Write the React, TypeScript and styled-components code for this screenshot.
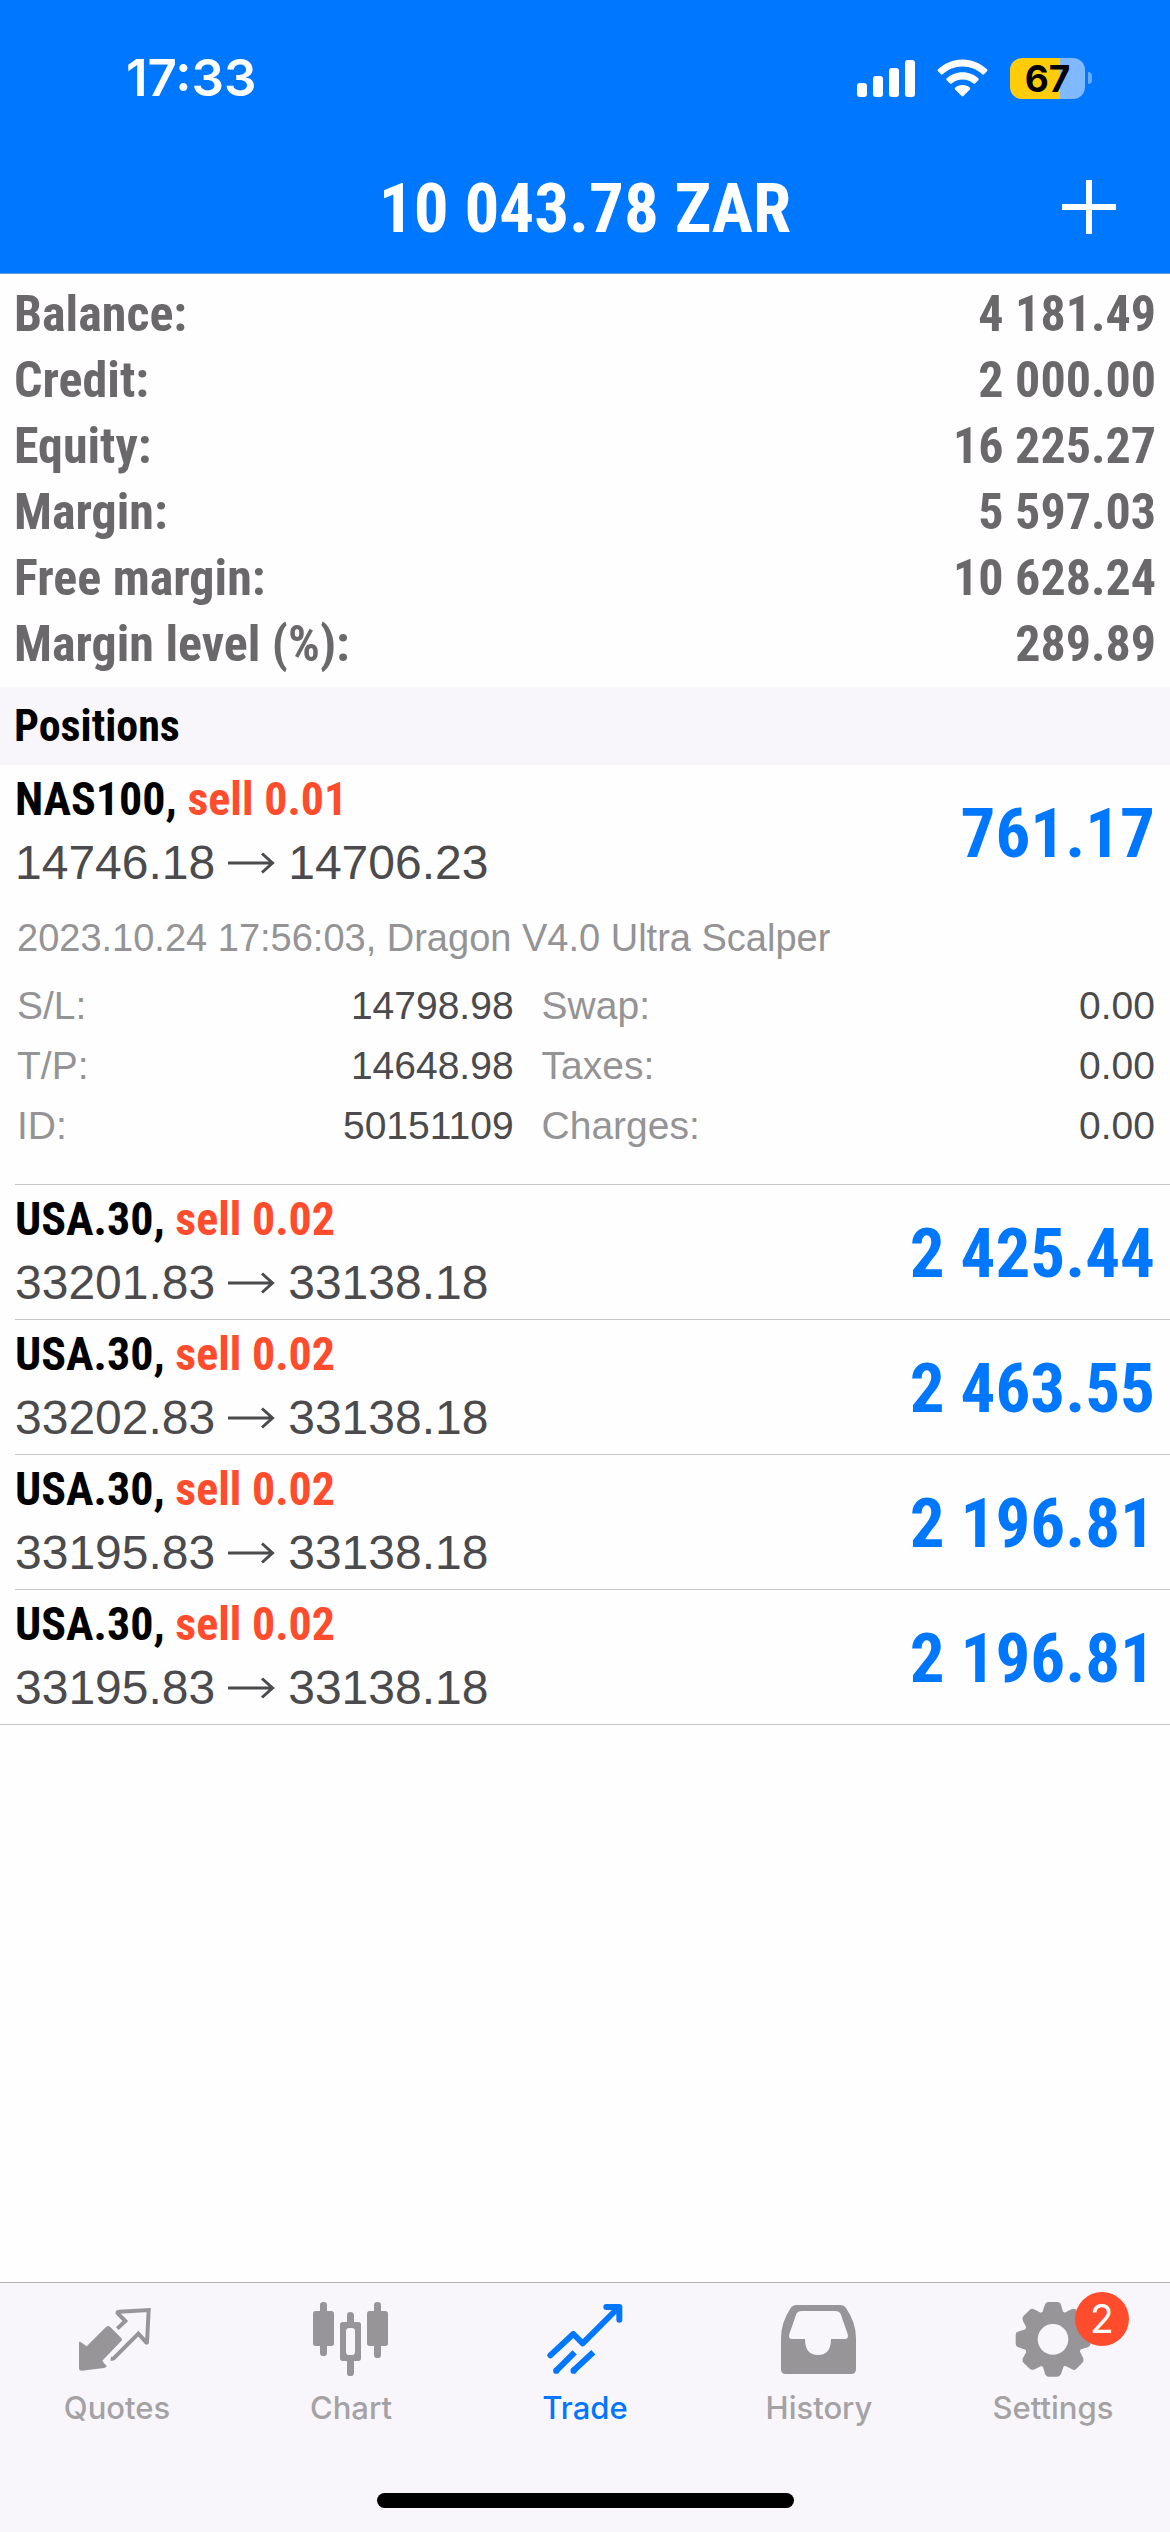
import React, { useState } from "react";
import styled, { createGlobalStyle } from "styled-components";

const colors = {
  blue: "#0077ff",
  orange: "#ff4c2c",
  summary: "#6a686b",
  ink: "#4b4a4d",
  label: "#949396",
  tab: "#979598",
  tabText: "#a4a2a5",
  line: "#c7c6c9",
  panel: "#f8f6fa",
};

const narrow = `"Roboto Condensed", "Helvetica Neue Condensed", "Liberation Sans", sans-serif`;
const regular = `"Liberation Sans", Arial, sans-serif`;
const system = `Inter, Roboto, sans-serif`;

const GlobalStyle = createGlobalStyle`
  *, *::before, *::after { box-sizing: border-box; }
  body { margin: 0; background: #fefefe; font-family: ${regular}; }
  dl, dd, dt, h1, h2, p, ul { margin: 0; padding: 0; }
  button { border: 0; padding: 0; background: none; color: inherit; font: inherit; cursor: pointer; }
`;

const Screen = styled.div`
  min-height: 100vh;
  display: flex;
  flex-direction: column;
`;

const Header = styled.header`
  background: ${colors.blue};
  border-bottom: 1px solid #5c9be0;
  color: #fff;
`;

const StatusBar = styled.div`
  height: 141px;
  padding: 15px 78px 0 126px;
  display: flex;
  align-items: center;
  justify-content: space-between;
`;

const Clock = styled.time`
  font: 600 51px/60px ${system};
`;

const StatusIcons = styled.div`
  display: flex;
  align-items: center;
  gap: 22px;
`;

const Battery = styled.div`
  display: flex;
  align-items: center;
  gap: 3px;
`;

const BatteryBody = styled.div<{ $level: number }>`
  width: 75px;
  height: 41px;
  border-radius: 12px;
  text-align: center;
  color: #000;
  font: 700 37px/41px ${system};
  background: linear-gradient(
    to right,
    #ffcc0a ${(p) => p.$level}%,
    #80b9ff ${(p) => p.$level}%
  );
`;

const BatteryTip = styled.div`
  width: 4px;
  height: 12px;
  border-radius: 0 6px 6px 0;
  background: #66abff;
`;

const NavBar = styled.div`
  height: 132px;
  padding: 0 54px;
  display: grid;
  grid-template-columns: 54px 1fr 54px;
  align-items: center;
`;

const Title = styled.h1`
  grid-column: 2;
  padding-top: 4px;
  text-align: center;
  font: 700 69px/84px ${narrow};
`;

const AddButton = styled.button`
  height: 54px;
  svg { display: block; }
`;

const Summary = styled.dl`
  padding: 7px 14px 10px;
  color: ${colors.summary};
  font: 700 50px/66px ${narrow};
`;

const SummaryRow = styled.div`
  display: flex;
  justify-content: space-between;
`;

const SectionTitle = styled.h2`
  padding: 0 14px;
  background: ${colors.panel};
  color: #000;
  font: 700 44px/78px ${narrow};
`;

const PositionList = styled.ul`
  list-style: none;
`;

const PositionItem = styled.li`
  margin-left: 15px;
  padding-right: 15px;
  border-bottom: 1px solid ${colors.line};
  &:last-child {
    margin-left: 0;
    padding-left: 15px;
  }
`;

const PositionHead = styled.button`
  width: 100%;
  padding: 3px 0 5px;
  display: flex;
  align-items: center;
  justify-content: space-between;
  text-align: left;
`;

const Deal = styled.span`
  display: block;
  color: #000;
  font: 700 46px/63px ${narrow};
`;

const Side = styled.span`
  color: ${colors.orange};
`;

const Prices = styled.span`
  display: flex;
  align-items: center;
  gap: 13px;
  color: ${colors.ink};
  font: 400 48px/63px ${regular};
`;

const Profit = styled.span`
  padding-top: 6px;
  color: ${colors.blue};
  font: 700 69px/84px ${narrow};
`;

const Details = styled.div`
  padding: 9px 0 28px 2px;
  color: ${colors.label};
  font: 400 39px/60px ${regular};
`;

const Note = styled.p`
  font-size: 38px;
`;

const DetailGrid = styled.dl`
  margin-top: 8px;
  display: grid;
  grid-template-columns: 17fr 21fr;
  column-gap: 28px;
`;

const DetailRow = styled.div`
  display: flex;
  justify-content: space-between;
  dd { color: ${colors.ink}; }
`;

const Footer = styled.footer`
  margin-top: auto;
  border-top: 1px solid #b3b1b5;
  background: ${colors.panel};
`;

const TabBar = styled.nav`
  display: grid;
  grid-template-columns: repeat(5, 1fr);
`;

const Tab = styled.button<{ $active?: boolean }>`
  padding-top: 18px;
  display: flex;
  flex-direction: column;
  align-items: center;
  gap: 11px;
  color: ${(p) => (p.$active ? colors.blue : colors.tab)};
`;

const TabIcon = styled.span`
  position: relative;
  width: 76px;
  height: 76px;
  svg { display: block; }
`;

const TabLabel = styled.span<{ $active?: boolean }>`
  color: ${(p) => (p.$active ? colors.blue : colors.tabText)};
  font: 500 31px/40px ${system};
`;

const Badge = styled.span`
  position: absolute;
  top: -9px;
  left: 60px;
  width: 54px;
  height: 54px;
  border-radius: 50%;
  background: ${colors.orange};
  color: #fff;
  text-align: center;
  font: 400 39px/54px ${system};
`;

const HomeIndicator = styled.div`
  width: 417px;
  height: 15px;
  margin: 65px auto 24px;
  border-radius: 8px;
  background: #000;
`;

const SignalIcon = () => (
  <svg width="58" height="38" viewBox="0 0 58 38" fill="currentColor" aria-hidden="true">
    <rect x="0" y="24" width="10" height="14" rx="3" />
    <rect x="16" y="17" width="10" height="21" rx="3" />
    <rect x="32" y="9" width="10" height="29" rx="3" />
    <rect x="48" y="1" width="10" height="37" rx="3" />
  </svg>
);

const WifiIcon = () => (
  <svg width="51" height="38" viewBox="0 0 51 38" fill="currentColor" aria-hidden="true">
    <path d="M25.500 0.500C35 0.500 43.500 4.300 50 10.300Q51 11.300 50 12.300L47 15.300Q46.200 16 45.300 15.200C40 10.400 33 7.600 25.500 7.600S11 10.400 5.700 15.200Q4.800 16 4 15.300L1 12.300Q0 11.300 1 10.300C7.500 4.300 16 0.500 25.500 0.500Z" />
    <path d="M25.500 13.200C31.800 13.200 37.200 15.500 41.300 19.300Q42.200 20.200 41.300 21.200L38 24.500Q37.200 25.200 36.300 24.500C33.300 21.900 29.600 20.400 25.500 20.400S17.700 21.900 14.700 24.500Q13.800 25.200 13 24.500L9.700 21.200Q8.800 20.200 9.700 19.300C13.800 15.500 19.200 13.200 25.500 13.200Z" />
    <path d="M25.500 26C28.400 26 30.900 27 32.900 28.700Q33.700 29.600 32.900 30.500L26.400 37Q25.500 37.800 24.600 37L18.100 30.500Q17.300 29.600 18.100 28.700C20.100 27 22.600 26 25.500 26Z" />
  </svg>
);

const PlusIcon = () => (
  <svg width="54" height="54" viewBox="0 0 54 54" fill="currentColor" aria-hidden="true">
    <path d="M24 0h6v24h24v6H30v24h-6V30H0v-6h24z" />
  </svg>
);

const ArrowIcon = () => (
  <svg width="47" height="22" viewBox="0 0 47 22" fill="none" stroke="currentColor" strokeWidth="3" aria-label="to">
    <path d="M0 11H44M34 1.500L44.500 11L34 20.500" />
  </svg>
);

const QuotesIcon = () => (
  <svg width="76" height="76" viewBox="117 93 228 228" aria-hidden="true">
    <path
      fill="currentColor"
      d="M117 215Q124 215 140 229L198 171Q204 165 210 170L243 203Q249 209 243 214L187 272Q192 281 200 287Q200 293 192 294L126 302Q117 303 117 293Z"
    />
    <path
      fill="none"
      stroke="currentColor"
      strokeWidth="12"
      d="M232 176L256 153L234 131Q229 126 238 125L326 120L321 217Q320 220 316 214L295 191L221 265Q219 267 212 266"
    />
  </svg>
);

const ChartIcon = () => (
  <svg width="76" height="76" viewBox="819 93 228 228" fill="currentColor" aria-hidden="true">
    <rect x="840" y="96" width="21" height="162" rx="10" />
    <rect x="819" y="123" width="63" height="105" rx="8" />
    <rect x="1002" y="96" width="21" height="168" rx="10" />
    <rect x="981" y="123" width="63" height="105" rx="8" />
    <path
      fillRule="evenodd"
      d="M921 136Q921 126 931 126T942 136V156H955Q963 156 963 164V265Q963 273 955 273H942V308Q942 318 931 318T921 308V273H908Q900 273 900 265V164Q900 156 908 156H921ZM928 174Q918 174 918 184V245Q918 255 928 255H935Q945 255 945 245V184Q945 174 935 174Z"
    />
  </svg>
);

const TradeIcon = () => (
  <svg
    width="76"
    height="76"
    viewBox="140 93 228 228"
    fill="none"
    stroke="currentColor"
    strokeWidth="18"
    aria-hidden="true"
  >
    <path strokeLinecap="round" strokeLinejoin="round" d="M150 256L219 192L247 220L350 117" />
    <path strokeLinecap="round" strokeLinejoin="round" d="M318 111H357V149" />
    <path d="M340 106H362V130Z" fill="currentColor" stroke="none" />
    <path d="M168 302L223 247M219 302L279 247" />
    <circle cx="168" cy="302" r="9.500" fill="currentColor" stroke="none" />
    <circle cx="220" cy="302" r="9.500" fill="currentColor" stroke="none" />
  </svg>
);

const HistoryIcon = () => (
  <svg width="76" height="76" viewBox="843 93 228 228" fill="currentColor" aria-hidden="true">
    <path
      fillRule="evenodd"
      d="M890 105H1020Q1032 105 1038 114Q1068 158 1068 204V298Q1068 312 1054 312H857Q843 312 843 298V204Q843 158 872 114Q878 105 890 105ZM905 123Q893 123 889 132L868 192Q864 207 876 207H915Q915 255 954 255T993 207H1034Q1047 207 1043 192L1022 132Q1018 123 1005 123Z"
    />
  </svg>
);

const tooth = "M310 112Q314 96 324 96H351Q360 96 363 112L368 128H305Z";

const SettingsIcon = () => (
  <svg width="76" height="76" viewBox="223 93 228 228" fill="currentColor" aria-hidden="true">
    {[0, 45, 90, 135, 180, 225, 270, 315].map((angle) => (
      <path key={angle} d={tooth} transform={`rotate(${angle} 337 208)`} />
    ))}
    <circle cx="337" cy="208" r="67" fill="none" stroke="currentColor" strokeWidth="42" />
  </svg>
);

const summary = [
  ["Balance:", "4 181.49"],
  ["Credit:", "2 000.00"],
  ["Equity:", "16 225.27"],
  ["Margin:", "5 597.03"],
  ["Free margin:", "10 628.24"],
  ["Margin level (%):", "289.89"],
];

type Position = {
  id: number;
  symbol: string;
  side: string;
  open: string;
  current: string;
  profit: string;
  note?: string;
  details?: string[][];
};

const positions: Position[] = [
  {
    id: 1,
    symbol: "NAS100",
    side: "sell 0.01",
    open: "14746.18",
    current: "14706.23",
    profit: "761.17",
    note: "2023.10.24 17:56:03, Dragon V4.0 Ultra Scalper",
    details: [
      ["S/L:", "14798.98"],
      ["Swap:", "0.00"],
      ["T/P:", "14648.98"],
      ["Taxes:", "0.00"],
      ["ID:", "50151109"],
      ["Charges:", "0.00"],
    ],
  },
  { id: 2, symbol: "USA.30", side: "sell 0.02", open: "33201.83", current: "33138.18", profit: "2 425.44" },
  { id: 3, symbol: "USA.30", side: "sell 0.02", open: "33202.83", current: "33138.18", profit: "2 463.55" },
  { id: 4, symbol: "USA.30", side: "sell 0.02", open: "33195.83", current: "33138.18", profit: "2 196.81" },
  { id: 5, symbol: "USA.30", side: "sell 0.02", open: "33195.83", current: "33138.18", profit: "2 196.81" },
];

const tabs = [
  { name: "Quotes", Icon: QuotesIcon },
  { name: "Chart", Icon: ChartIcon },
  { name: "Trade", Icon: TradeIcon },
  { name: "History", Icon: HistoryIcon },
  { name: "Settings", Icon: SettingsIcon, badge: 2 },
];

export default function App() {
  const [openId, setOpenId] = useState<number | null>(1);
  const [activeTab, setActiveTab] = useState("Trade");

  return (
    <Screen>
      <GlobalStyle />
      <Header>
        <StatusBar>
          <Clock>17:33</Clock>
          <StatusIcons>
            <SignalIcon />
            <WifiIcon />
            <Battery>
              <BatteryBody $level={67}>67</BatteryBody>
              <BatteryTip />
            </Battery>
          </StatusIcons>
        </StatusBar>
        <NavBar>
          <Title>10 043.78 ZAR</Title>
          <AddButton aria-label="New order">
            <PlusIcon />
          </AddButton>
        </NavBar>
      </Header>

      <main>
        <Summary>
          {summary.map(([label, value]) => (
            <SummaryRow key={label}>
              <dt>{label}</dt>
              <dd>{value}</dd>
            </SummaryRow>
          ))}
        </Summary>

        <SectionTitle>Positions</SectionTitle>
        <PositionList>
          {positions.map((p) => (
            <PositionItem key={p.id}>
              <PositionHead
                aria-expanded={openId === p.id}
                onClick={() => setOpenId(openId === p.id ? null : p.id)}
              >
                <span>
                  <Deal>
                    {p.symbol}, <Side>{p.side}</Side>
                  </Deal>
                  <Prices>
                    {p.open}
                    <ArrowIcon />
                    {p.current}
                  </Prices>
                </span>
                <Profit>{p.profit}</Profit>
              </PositionHead>
              {openId === p.id && p.details && (
                <Details>
                  <Note>{p.note}</Note>
                  <DetailGrid>
                    {p.details.map(([label, value]) => (
                      <DetailRow key={label}>
                        <dt>{label}</dt>
                        <dd>{value}</dd>
                      </DetailRow>
                    ))}
                  </DetailGrid>
                </Details>
              )}
            </PositionItem>
          ))}
        </PositionList>
      </main>

      <Footer>
        <TabBar>
          {tabs.map(({ name, Icon, badge }) => (
            <Tab key={name} $active={activeTab === name} onClick={() => setActiveTab(name)}>
              <TabIcon>
                <Icon />
                {badge && <Badge>{badge}</Badge>}
              </TabIcon>
              <TabLabel $active={activeTab === name}>{name}</TabLabel>
            </Tab>
          ))}
        </TabBar>
        <HomeIndicator />
      </Footer>
    </Screen>
  );
}
